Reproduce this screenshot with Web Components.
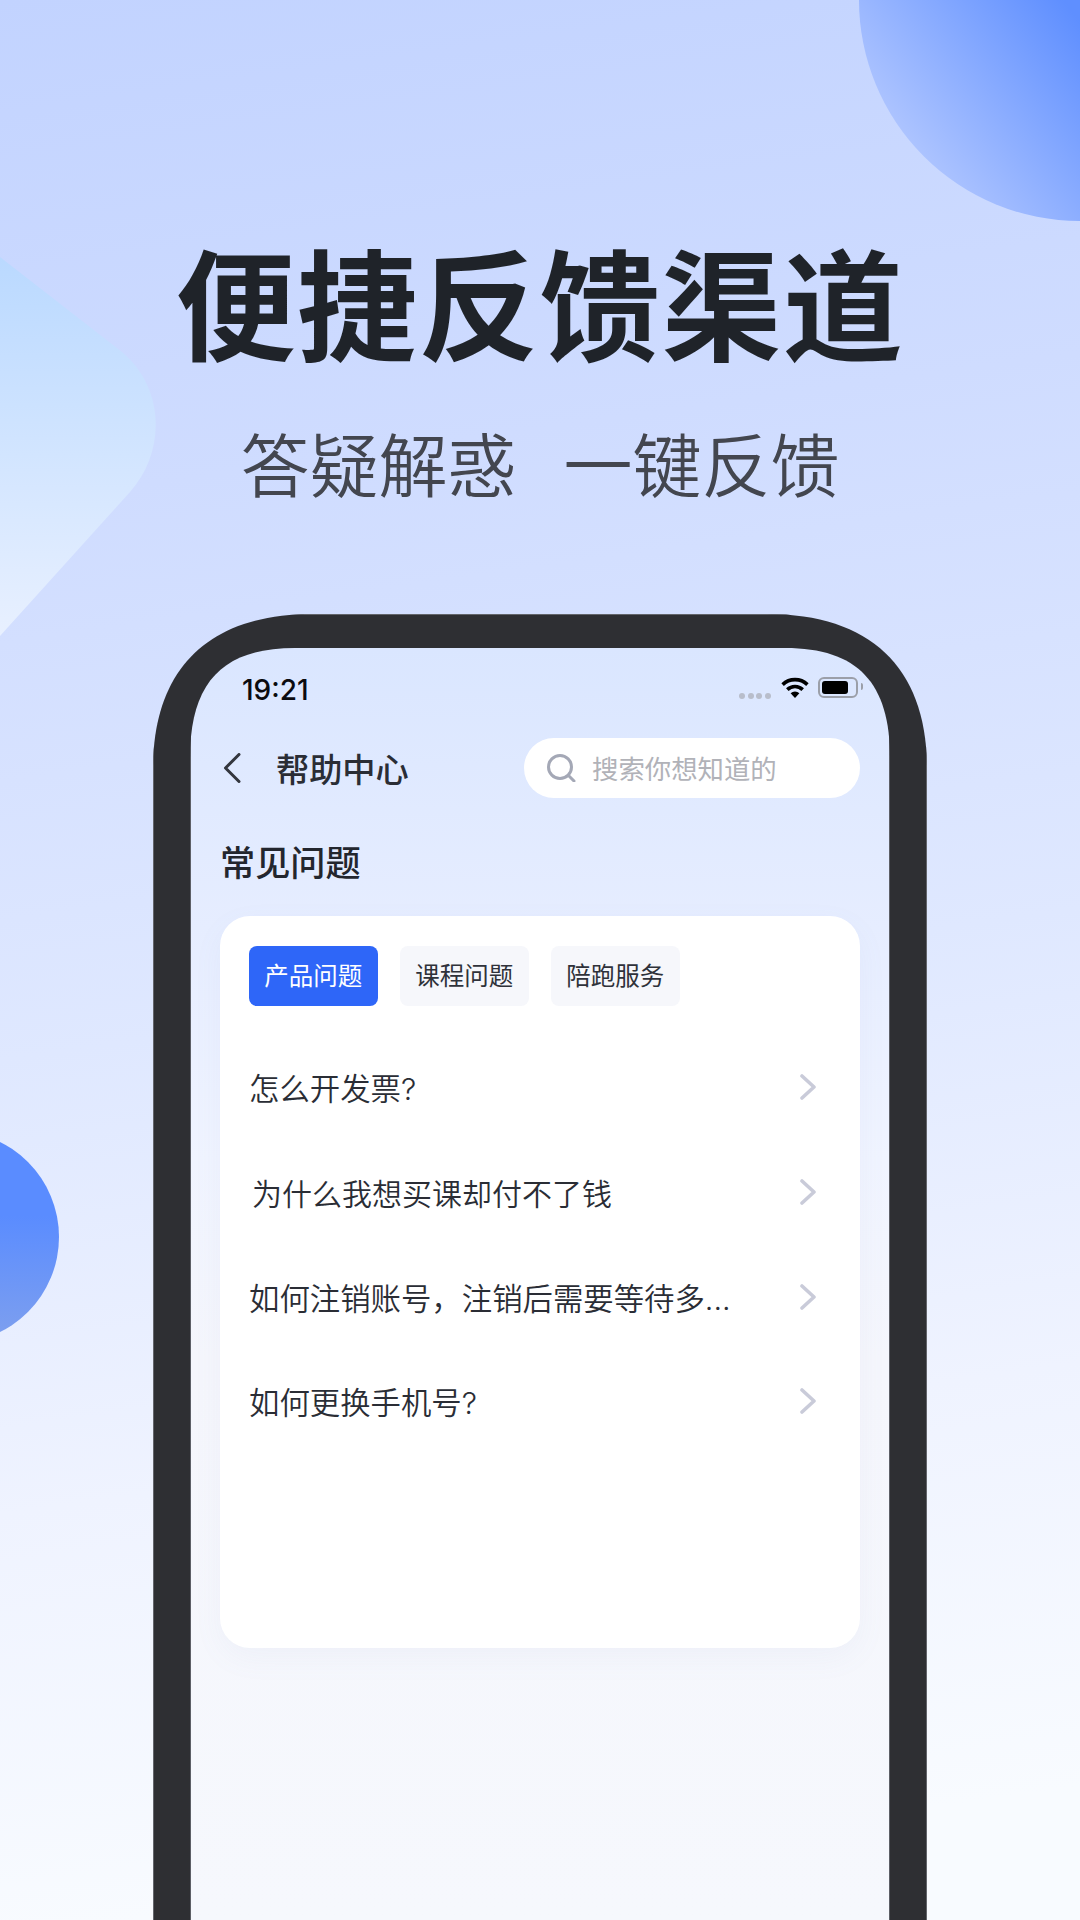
<!DOCTYPE html>
<html lang="zh">
<head>
<meta charset="utf-8">
<title>便捷反馈渠道</title>
<style>
  html, body { margin: 0; padding: 0; }
  body { width: 1080px; height: 1920px; overflow: hidden; font-family: "Noto Sans CJK SC", "Noto Sans", sans-serif; }
</style>
</head>
<body>
<promo-page>
  <span slot="title">便捷反馈渠道</span>
  <span slot="subtitle">答疑解惑&nbsp;&nbsp;一键反馈</span>
  <phone-frame>
    <status-bar></status-bar>
    <nav-bar heading="帮助中心" placeholder="搜索你想知道的"></nav-bar>
    <section-title>常见问题</section-title>
    <faq-card>
      <tab-chip slot="tabs" active>产品问题</tab-chip>
      <tab-chip slot="tabs">课程问题</tab-chip>
      <tab-chip slot="tabs">陪跑服务</tab-chip>
      <faq-row>怎么开发票?</faq-row>
      <faq-row indent>为什么我想买课却付不了钱</faq-row>
      <faq-row>如何注销账号，注销后需要等待多...</faq-row>
      <faq-row>如何更换手机号?</faq-row>
    </faq-card>
  </phone-frame>
</promo-page>

<script>
const FONT = '"Noto Sans CJK SC", "Noto Sans", sans-serif';

class PromoPage extends HTMLElement {
  constructor() {
    super();
    this.attachShadow({mode: 'open'});
    this.shadowRoot.innerHTML = `
      <style>
        :host {
          display: block;
          position: relative;
          width: 1080px;
          height: 1920px;
          overflow: hidden;
          background: linear-gradient(172deg, #c2d3ff 0, #cfdcff 500px, #dfe8ff 1050px, #eff3ff 1500px, #f8fbff 1920px);
          font-family: ${FONT};
        }
        .decor { position: absolute; left: 0; top: 0; }
        .content { position: relative; display: flex; flex-direction: column; align-items: center; }
        .title {
          margin-top: 221.5px;
          height: 156px;
          line-height: 156px;
          font-size: 120px;
          font-weight: 700;
          letter-spacing: 1.5px;
          color: #1f2329;
        }
        .subtitle {
          margin-top: 34px;
          height: 100px;
          line-height: 100px;
          font-size: 69px;
          font-weight: 350;
          word-spacing: 8px;
          color: #43464f;
        }
        .phone { margin-top: 102.5px; }
      </style>
      <svg class="decor" width="1080" height="1920" viewBox="0 0 1080 1920">
        <defs>
          <linearGradient id="g1" gradientUnits="userSpaceOnUse" x1="1075" y1="15" x2="885" y2="165">
            <stop offset="0" stop-color="#5f8fff"/>
            <stop offset="1" stop-color="#b9ccff"/>
          </linearGradient>
          <linearGradient id="g2" x1="0" y1="0" x2="0" y2="1">
            <stop offset="0" stop-color="#bad9ff"/>
            <stop offset="1" stop-color="#e8f0ff"/>
          </linearGradient>
          <linearGradient id="g3" x1="0" y1="0" x2="0" y2="1">
            <stop offset="0.4" stop-color="#5a8cff"/>
            <stop offset="1" stop-color="#7fa0ee"/>
          </linearGradient>
        </defs>
        <circle cx="1080" cy="0" r="221" fill="url(#g1)"/>
        <path d="M0 257 L122 352 C165 388 166 452 130 492 L0 636 Z" fill="url(#g2)"/>
        <circle cx="-47" cy="1237" r="106" fill="url(#g3)"/>
      </svg>
      <div class="content">
        <div class="title"><slot name="title"></slot></div>
        <div class="subtitle"><slot name="subtitle"></slot></div>
        <div class="phone"><slot></slot></div>
      </div>`;
  }
}

class PhoneFrame extends HTMLElement {
  constructor() {
    super();
    this.attachShadow({mode: 'open'});
    this.shadowRoot.innerHTML = `
      <style>
        :host {
          display: block;
          box-sizing: border-box;
          width: 774px;
          height: 1400px;
          padding: 33px 36px 0;
          background: #2e2f33;
          border: 1px solid #63656b;
          border-bottom: 0;
          /* squircle corners, plain radius is too round */
          clip-path: path('M0 155 C0 55 55 0 160 0 H614 C719 0 774 55 774 155 V1400 H0 Z');
        }
        .screen {
          box-sizing: border-box;
          height: 100%;
          padding: 0 29px;
          border-left: 1px solid #5d5f66;
          border-right: 1px solid #5d5f66;
          clip-path: path('M0 110 C0 35 32 0 105 0 H595 C668 0 700 35 700 110 V1400 H0 Z');
          background: linear-gradient(180deg, #dae6ff 0, #e6edff 280px, #f0f4ff 510px, #f5f6fc 710px, #f6f8fd 1271px);
        }
      </style>
      <div class="screen"><slot></slot></div>`;
  }
}

class StatusBar extends HTMLElement {
  constructor() {
    super();
    this.attachShadow({mode: 'open'});
    this.shadowRoot.innerHTML = `
      <style>
        :host { display: flex; align-items: flex-start; height: 90px; padding: 26px 0 0 22px; box-sizing: border-box; }
        .time { font: 500 28px/32px Inter, Roboto, sans-serif; color: #0b0b0f; }
        .right { margin-left: auto; display: flex; align-items: flex-start; margin-right: 2px; padding-top: 3px; }
        .dots { display: flex; gap: 2.7px; margin-top: 16px; margin-right: 10px; }
        .dots i { width: 6px; height: 6px; border-radius: 50%; background: #b8bdcb; }
        .wifi { display: block; margin-right: 9px; }
        .batt {
          position: relative; box-sizing: border-box; width: 40px; height: 21px; padding: 2px;
          border: 2px solid #9b9fa9; border-radius: 6px;
        }
        .batt b { display: block; width: 26px; height: 13px; background: #000; border-radius: 3px; }
        .batt::after {
          content: ""; position: absolute; right: -7px; top: 4px; width: 2px; height: 7px;
          background: #9b9fa9; border-radius: 0 2px 2px 0;
        }
      </style>
      <div class="time">19:21</div>
      <div class="right">
        <div class="dots"><i></i><i></i><i></i><i></i></div>
        <svg class="wifi" width="28" height="21" viewBox="0 0 28 21">
          <g fill="none" stroke="#000" stroke-width="3.6">
            <path d="M1.6 7.6 A18 18 0 0 1 26.4 7.6"/>
            <path d="M6.3 12.6 A11 11 0 0 1 21.7 12.6"/>
          </g>
          <path d="M9.6 16.3 A6.4 6.4 0 0 1 18.4 16.3 L14 21 Z" fill="#000"/>
        </svg>
        <div class="batt"><b></b></div>
      </div>`;
  }
}

class NavBar extends HTMLElement {
  constructor() {
    super();
    this.attachShadow({mode: 'open'});
  }
  connectedCallback() {
    this.shadowRoot.innerHTML = `
      <style>
        :host { display: flex; align-items: center; height: 60px; }
        .back { display: block; margin-left: 3px; }
        h1 { margin: 0 0 0 35px; font-size: 33.2px; font-weight: 500; color: #2a2d35; line-height: 60px; }
        .search {
          margin-left: auto; box-sizing: border-box; width: 336px; height: 60px;
          display: flex; align-items: center; gap: 16px; padding-left: 23px;
          background: #fff; border-radius: 30px;
        }
        .search svg { display: block; }
        .search span { font-size: 26.4px; color: #b1b2b8; line-height: 60px; }
      </style>
      <svg class="back" width="18" height="30" viewBox="0 0 18 30">
        <path d="M16 1.5 L2.5 15 L16 28.5" fill="none" stroke="#33363e" stroke-width="3" stroke-linecap="round" stroke-linejoin="round"/>
      </svg>
      <h1>${this.getAttribute('heading')}</h1>
      <div class="search">
        <svg width="29" height="28" viewBox="0 0 29 28">
          <circle cx="13" cy="13" r="11.5" fill="none" stroke="#a4a8b6" stroke-width="3"/>
          <path d="M21.5 21.5 L27 27" stroke="#a4a8b6" stroke-width="3" stroke-linecap="round"/>
        </svg>
        <span>${this.getAttribute('placeholder')}</span>
      </div>`;
  }
}

class SectionTitle extends HTMLElement {
  constructor() {
    super();
    this.attachShadow({mode: 'open'});
    this.shadowRoot.innerHTML = `
      <style>
        :host {
          display: block; margin-top: 39px; height: 48px; line-height: 48px;
          font-size: 35.2px; font-weight: 500; color: #23262e;
        }
      </style>
      <slot></slot>`;
  }
}

class FaqCard extends HTMLElement {
  constructor() {
    super();
    this.attachShadow({mode: 'open'});
    this.shadowRoot.innerHTML = `
      <style>
        :host {
          display: block; box-sizing: border-box; width: 640px; height: 732px; margin-top: 31px;
          padding: 30px 29px 0;
          background: #fff; border-radius: 30px;
          box-shadow: 0 10px 30px rgba(120, 130, 190, 0.06);
        }
        .tabs { display: flex; gap: 22.5px; margin-bottom: 29px; }
      </style>
      <div class="tabs"><slot name="tabs"></slot></div>
      <slot></slot>`;
  }
}

class TabChip extends HTMLElement {
  constructor() {
    super();
    this.attachShadow({mode: 'open'});
    this.shadowRoot.innerHTML = `
      <style>
        :host {
          display: block; box-sizing: border-box; width: 128.5px; height: 60px;
          line-height: 58px; text-align: center; font-size: 24.5px;
          border-radius: 8px; background: #f6f7fb; color: #2f323a;
        }
        :host([active]) { background: #2e66f8; color: #fff; }
      </style>
      <slot></slot>`;
  }
}

class FaqRow extends HTMLElement {
  constructor() {
    super();
    this.attachShadow({mode: 'open'});
    this.shadowRoot.innerHTML = `
      <style>
        :host {
          display: flex; align-items: center; justify-content: space-between;
          height: 104.7px; font-family: Inter, ${FONT}; font-size: 30.4px; font-weight: 350; color: #2a2d35; padding-right: 15px;
        }
        :host([indent]) { font-size: 30px; }
        :host([indent]) .text { padding-left: 3px; }
        svg { display: block; }
      </style>
      <span class="text"><slot></slot></span>
      <svg width="16" height="26" viewBox="0 0 16 26">
        <path d="M2 2 L14 13 L2 24" fill="none" stroke="#c9cbd9" stroke-width="3.6" stroke-linecap="round" stroke-linejoin="round"/>
      </svg>`;
  }
}

customElements.define('promo-page', PromoPage);
customElements.define('phone-frame', PhoneFrame);
customElements.define('status-bar', StatusBar);
customElements.define('nav-bar', NavBar);
customElements.define('section-title', SectionTitle);
customElements.define('faq-card', FaqCard);
customElements.define('tab-chip', TabChip);
customElements.define('faq-row', FaqRow);
</script>
</body>
</html>
